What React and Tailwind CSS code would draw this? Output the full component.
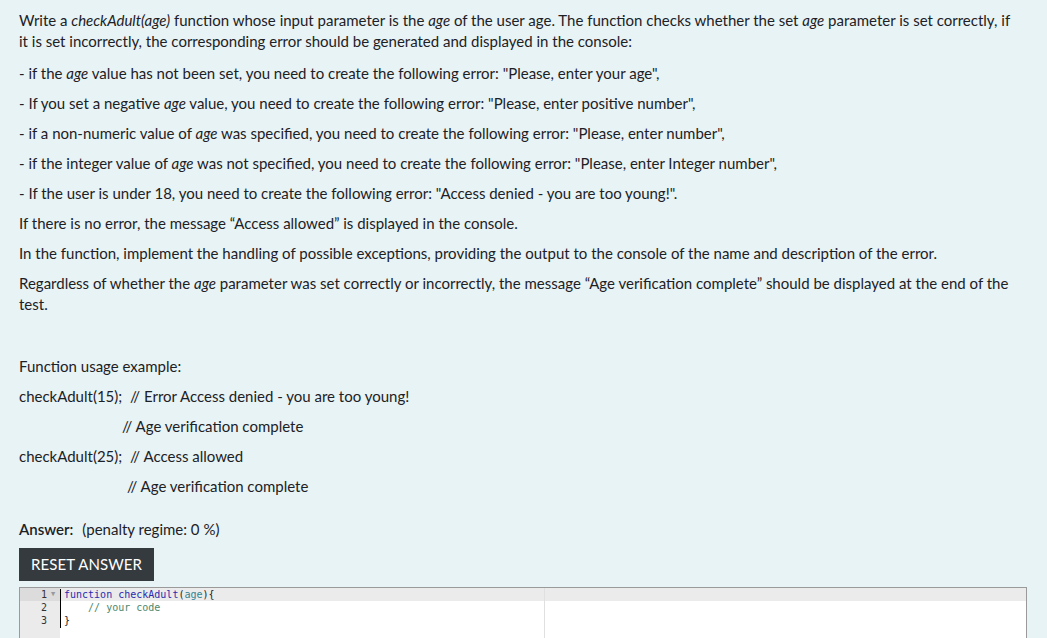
import React from "react";

const P = ({ children, className = "" }) => (
  <p className={"mb-[9px] leading-[21px] " + className}>{children}</p>
);

const Em = ({ children }) => <em className="italic">{children}</em>;

export default function App() {
  return (
    <div className="min-h-screen bg-[#e7f3f5] text-[#1d2125] font-['Lato',sans-serif] text-[15px] pl-[19px] pr-[20px] pt-[10px] overflow-hidden">
      <P>
        Write a <Em>checkAdult(age)</Em> function whose input parameter is the <Em>age</Em> of the user age. The function checks whether the set <Em>age</Em> parameter is set correctly, if<br />
        it is set incorrectly, the corresponding error should be generated and displayed in the console:
      </P>
      <P className="mt-[11px]">- if the <Em>age</Em> value has not been set, you need to create the following error: "Please, enter your age",</P>
      <P>- If you set a negative <Em>age</Em> value, you need to create the following error: "Please, enter positive number",</P>
      <P>- if a non-numeric value of <Em>age</Em> was specified, you need to create the following error: "Please, enter number",</P>
      <P>- if the integer value of <Em>age</Em> was not specified, you need to create the following error: "Please, enter Integer number",</P>
      <P>- If the user is under 18, you need to create the following error: "Access denied - you are too young!".</P>
      <P>If there is no error, the message “Access allowed” is displayed in the console.</P>
      <P>In the function, implement the handling of possible exceptions, providing the output to the console of the name and description of the error.</P>
      <P>
        Regardless of whether the <Em>age</Em> parameter was set correctly or incorrectly, the message “Age verification complete” should be displayed at the end of the test.
      </P>
      <P className="h-[21px]" />
      <P className="mt-[11px]">Function usage example:</P>
      <P>checkAdult(15);&nbsp; // Error Access denied - you are too young!</P>
      <P className="pl-[103px]">// Age verification complete</P>
      <P>checkAdult(25);&nbsp; // Access allowed</P>
      <P className="pl-[108px]">// Age verification complete</P>

      <div className="mt-[22px] flex items-baseline gap-[9px] leading-[21px]">
        <span className="font-semibold text-[15px]">Answer:</span>
        <span className="text-[15px]">(penalty regime: 0 %)</span>
      </div>

      <button className="mt-[8px] h-[33px] px-[12px] bg-[#343a3e] text-white text-[15px] tracking-[0.1px] uppercase">
        Reset answer
      </button>

      <div className="mt-[6px] h-[60px] border border-[#9a9a9a] border-b-0 bg-white flex font-['DejaVu_Sans_Mono',monospace] text-[10px] leading-[13px]">
        <div className="w-[40px] bg-[#ebebeb] text-[#333] text-right flex flex-col">
          <div className="bg-[#dcdcdc] flex justify-end items-center h-[13px] pr-[1px]">
            <span>1</span>
            <span className="w-[12px] text-center text-[7px] text-[#999]">▼</span>
          </div>
          <div className="pr-[13px]">2</div>
          <div className="pr-[13px]">3</div>
        </div>
        <div className="flex-1 relative">
          <div className="absolute left-[484px] top-0 bottom-0 w-px bg-[#e0e0e0]" />
          <div className="absolute left-0 top-[1px] h-[39px] w-px bg-black" />
          <div className="bg-[#ebebeb] h-[13px] pl-[4px] whitespace-pre">
            <span className="text-[#2a2ab0]">function</span> <span className="text-[#2a2ab0]">checkAdult</span>(<span className="text-[#318495]">age</span>){"{"}
          </div>
          <div className="pl-[4px] whitespace-pre text-[#4c886b]">{"    // your code"}</div>
          <div className="pl-[4px] whitespace-pre">{"}"}</div>
        </div>
      </div>
    </div>
  );
}
